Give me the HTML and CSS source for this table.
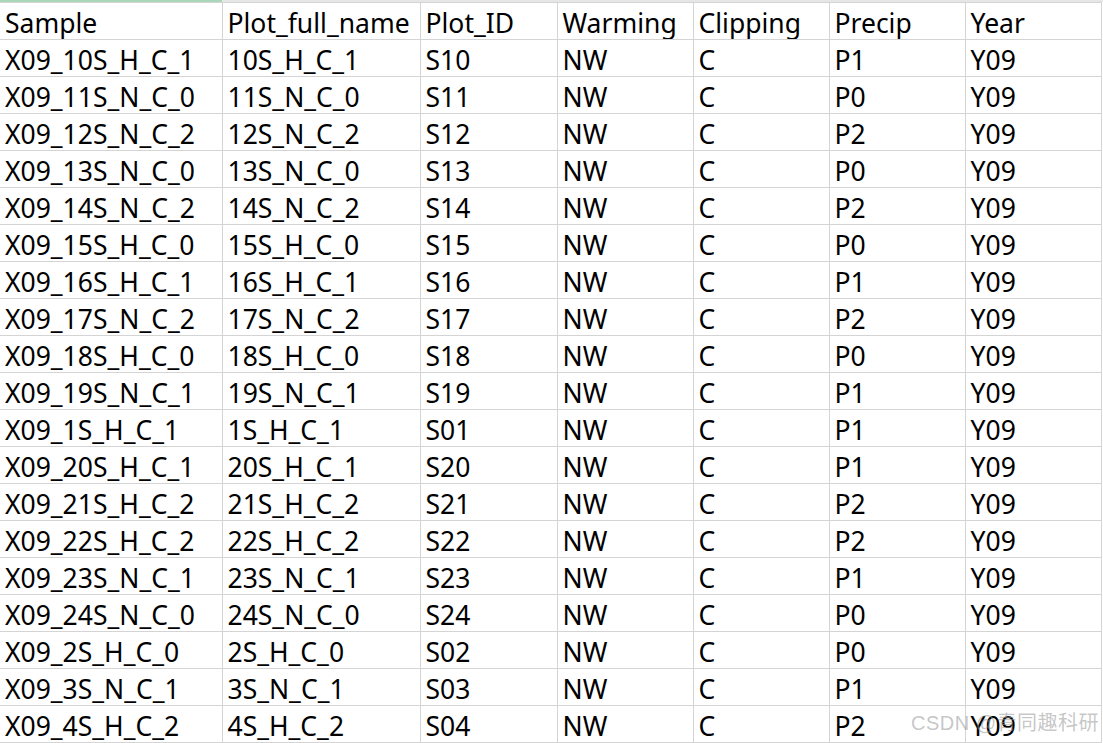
FILE: index.html
```html
<!DOCTYPE html>
<html lang="en">
<head>
<meta charset="utf-8">
<title>Sheet</title>
<link rel="stylesheet" href="styles.css">
</head>
<body>
<div class="sheet">
  <div class="topbar"><div class="topbar-a"></div><div class="topbar-rest"></div></div>
  <table class="grid">
    <colgroup>
      <col class="c1"><col class="c2"><col class="c3"><col class="c4"><col class="c5"><col class="c6"><col class="c7">
    </colgroup>
    <tbody>
      <tr><td>Sample</td><td>Plot_full_name</td><td>Plot_ID</td><td>Warming</td><td>Clipping</td><td>Precip</td><td>Year</td></tr>
      <tr><td>X09_10S_H_C_1</td><td>10S_H_C_1</td><td>S10</td><td>NW</td><td>C</td><td>P1</td><td>Y09</td></tr>
      <tr><td>X09_11S_N_C_0</td><td>11S_N_C_0</td><td>S11</td><td>NW</td><td>C</td><td>P0</td><td>Y09</td></tr>
      <tr><td>X09_12S_N_C_2</td><td>12S_N_C_2</td><td>S12</td><td>NW</td><td>C</td><td>P2</td><td>Y09</td></tr>
      <tr><td>X09_13S_N_C_0</td><td>13S_N_C_0</td><td>S13</td><td>NW</td><td>C</td><td>P0</td><td>Y09</td></tr>
      <tr><td>X09_14S_N_C_2</td><td>14S_N_C_2</td><td>S14</td><td>NW</td><td>C</td><td>P2</td><td>Y09</td></tr>
      <tr><td>X09_15S_H_C_0</td><td>15S_H_C_0</td><td>S15</td><td>NW</td><td>C</td><td>P0</td><td>Y09</td></tr>
      <tr><td>X09_16S_H_C_1</td><td>16S_H_C_1</td><td>S16</td><td>NW</td><td>C</td><td>P1</td><td>Y09</td></tr>
      <tr><td>X09_17S_N_C_2</td><td>17S_N_C_2</td><td>S17</td><td>NW</td><td>C</td><td>P2</td><td>Y09</td></tr>
      <tr><td>X09_18S_H_C_0</td><td>18S_H_C_0</td><td>S18</td><td>NW</td><td>C</td><td>P0</td><td>Y09</td></tr>
      <tr><td>X09_19S_N_C_1</td><td>19S_N_C_1</td><td>S19</td><td>NW</td><td>C</td><td>P1</td><td>Y09</td></tr>
      <tr><td>X09_1S_H_C_1</td><td>1S_H_C_1</td><td>S01</td><td>NW</td><td>C</td><td>P1</td><td>Y09</td></tr>
      <tr><td>X09_20S_H_C_1</td><td>20S_H_C_1</td><td>S20</td><td>NW</td><td>C</td><td>P1</td><td>Y09</td></tr>
      <tr><td>X09_21S_H_C_2</td><td>21S_H_C_2</td><td>S21</td><td>NW</td><td>C</td><td>P2</td><td>Y09</td></tr>
      <tr><td>X09_22S_H_C_2</td><td>22S_H_C_2</td><td>S22</td><td>NW</td><td>C</td><td>P2</td><td>Y09</td></tr>
      <tr><td>X09_23S_N_C_1</td><td>23S_N_C_1</td><td>S23</td><td>NW</td><td>C</td><td>P1</td><td>Y09</td></tr>
      <tr><td>X09_24S_N_C_0</td><td>24S_N_C_0</td><td>S24</td><td>NW</td><td>C</td><td>P0</td><td>Y09</td></tr>
      <tr><td>X09_2S_H_C_0</td><td>2S_H_C_0</td><td>S02</td><td>NW</td><td>C</td><td>P0</td><td>Y09</td></tr>
      <tr><td>X09_3S_N_C_1</td><td>3S_N_C_1</td><td>S03</td><td>NW</td><td>C</td><td>P1</td><td>Y09</td></tr>
      <tr><td>X09_4S_H_C_2</td><td>4S_H_C_2</td><td>S04</td><td>NW</td><td>C</td><td>P2</td><td>Y09</td></tr>
    </tbody>
  </table>
  <div class="watermark">CSDN @青同趣科研</div>
</div>
</body>
</html>
```

FILE: styles.css
```css
html, body {
  margin: 0;
  padding: 0;
  background: #ffffff;
}
.sheet {
  position: relative;
  width: 1103px;
  height: 743px;
  overflow: hidden;
  font-family: "Noto Sans", "Noto Sans CJK SC", sans-serif;
  color: #000;
}
.topbar {
  display: flex;
  height: 2px;
}
.topbar-a {
  width: 222px;
  background: #a9d7b9;
}
.topbar-rest {
  flex: 1;
  background: #e6e6e6;
}
.grid {
  border-collapse: collapse;
  table-layout: fixed;
  width: 1101px;
}
.c1 { width: 222px; }
.c2 { width: 198px; }
.c3 { width: 137px; }
.c4 { width: 136px; }
.c5 { width: 136px; }
.c6 { width: 136px; }
.c7 { width: 136px; }
.grid td {
  height: 37px;
  padding: 0 0 0 5px;
  border-top: 1px solid #d4d4d4;
  border-right: 1px solid #d4d4d4;
  vertical-align: bottom;
  font-size: 26.5px;
  line-height: 32px;
  letter-spacing: 0;
  white-space: nowrap;
  overflow: hidden;
  box-sizing: border-box;
}
.grid tr:last-child td {
  border-bottom: 1px solid #d4d4d4;
}
.watermark {
  position: absolute;
  right: 4px;
  bottom: 7px;
  font-size: 20px;
  color: rgba(150, 150, 150, 0.55);
  letter-spacing: 0.5px;
  font-family: "Liberation Sans", "Noto Sans CJK SC", sans-serif;
}
```
